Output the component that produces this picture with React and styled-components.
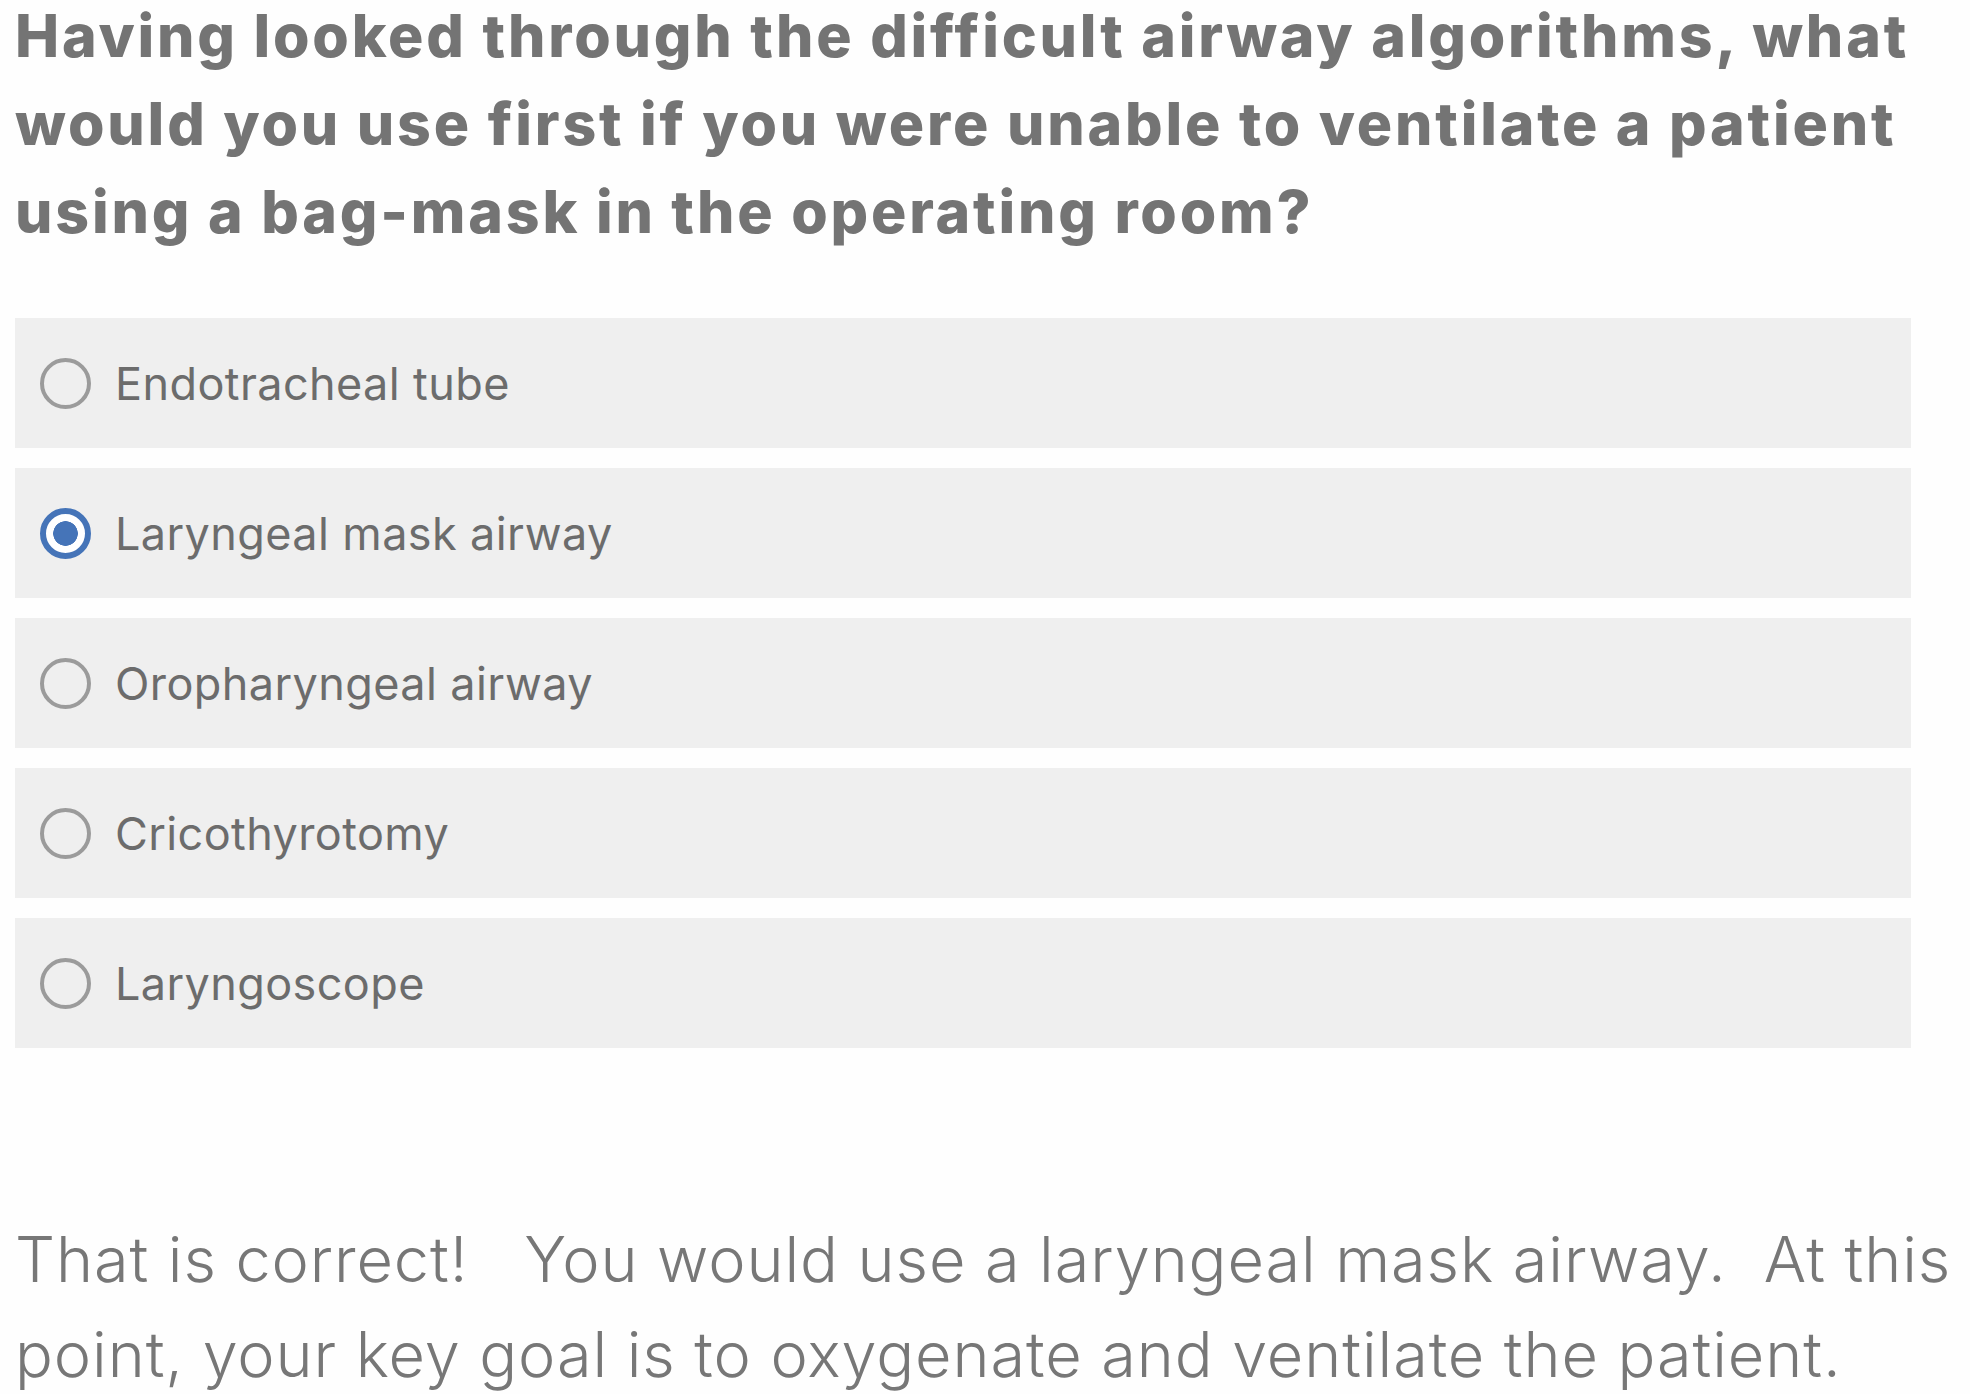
import styled, { createGlobalStyle } from "styled-components";

const GlobalStyle = createGlobalStyle`
  html, body {
    margin: 0;
    padding: 0;
    background: #fefefe;
  }
`;

const Page = styled.div`
  padding: 0 0 0 15px;
  width: 1955px;
  font-family: "Inter", "Noto Sans", sans-serif;
`;

const Question = styled.h2`
  margin: -8px 0 0;
  width: 1910px;
  font-size: 59px;
  line-height: 88px;
  font-weight: 800;
  color: #747474;
  letter-spacing: 2.8px;
`;

const Options = styled.div`
  display: flex;
  flex-direction: column;
  gap: 20px;
  width: 1896px;
  margin-top: 62px;
`;

const Option = styled.label`
  display: flex;
  align-items: center;
  gap: 24px;
  height: 130px;
  padding-left: 25px;
  background: #efefef;
  cursor: pointer;
`;

const Radio = styled.span`
  box-sizing: border-box;
  width: 51px;
  height: 51px;
  border-radius: 50%;
  flex-shrink: 0;
  border: ${(p) => (p.checked ? "6px solid #4574b8" : "4px solid #9b9b9b")};
  background: ${(p) =>
    p.checked
      ? "radial-gradient(circle, #4574b8 0 12px, #ffffff 12.6px)"
      : "transparent"};
`;

const OptionText = styled.span`
  font-size: 45px;
  font-weight: 400;
  color: #6c6c6c;
  letter-spacing: 0.4px;
`;

const Feedback = styled.p`
  margin: 164px 0 0;
  font-size: 63px;
  line-height: 95px;
  font-weight: 300;
  color: #777777;
  letter-spacing: 0.9px;
  white-space: pre-wrap;
`;

const answers = [
  "Endotracheal tube",
  "Laryngeal mask airway",
  "Oropharyngeal airway",
  "Cricothyrotomy",
  "Laryngoscope",
];

export default function App() {
  const selected = 1;
  return (
    <Page>
      <GlobalStyle />
      <Question>
        Having looked through the difficult airway algorithms, what would you
        use first if you were unable to ventilate a patient using a bag-mask in
        the operating room?
      </Question>
      <Options>
        {answers.map((a, i) => (
          <Option key={a}>
            <Radio checked={i === selected} />
            <OptionText>{a}</OptionText>
          </Option>
        ))}
      </Options>
      <Feedback>
        {"That is correct!   You would use a laryngeal mask airway.  At this point, your key goal is to oxygenate and ventilate the patient."}
      </Feedback>
    </Page>
  );
}
